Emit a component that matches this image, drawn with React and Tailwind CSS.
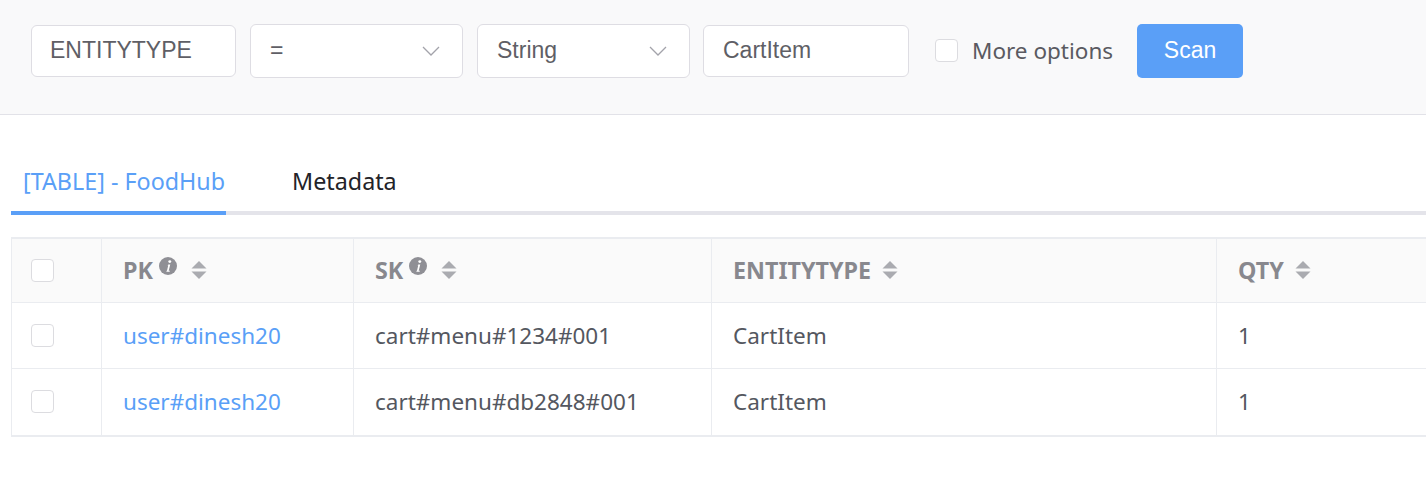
import React from "react";

const Chevron = () => (
  <svg width="18" height="10" viewBox="0 0 18 10" fill="none" className="shrink-0">
    <path d="M1 1l8 8 8-8" stroke="#a3a3aa" strokeWidth="1.3" />
  </svg>
);

const Info = () => (
  <svg width="18" height="18" viewBox="0 0 16 16" className="shrink-0 -mt-[9px] ml-[6px]">
    <circle cx="8" cy="8" r="8" fill="#8f8f95" />
    <circle cx="9.6" cy="4.1" r="1.3" fill="#fff" />
    <path d="M8.3 6.6h1.7l-1.4 5.6h1.1l-0.3 1h-2.9l0.3-1h0.3l1.1-4.6h-0.6z" fill="#fff" />
  </svg>
);

const Sort = () => (
  <svg width="16" height="20" viewBox="0 0 16 20" className="shrink-0">
    <path d="M8 1l7.5 7.5H0.5z" fill="#aaabb0" />
    <path d="M8 19l7.5-7.5H0.5z" fill="#aaabb0" />
  </svg>
);

const Box = () => (
  <div className="w-[23px] h-[23px] rounded-[4px] border border-[#dcdce0] bg-white" />
);

const rows = [
  { pk: "user#dinesh20", sk: "cart#menu#1234#001", type: "CartItem", qty: "1" },
  { pk: "user#dinesh20", sk: "cart#menu#db2848#001", type: "CartItem", qty: "1" },
];

const cols = "grid grid-cols-[89px_252px_358px_505px_1fr]";

export default function App() {
  return (
    <div className="w-[1426px] h-[492px] bg-white overflow-hidden font-['Noto_Sans',sans-serif]">
      <div className="h-[115px] bg-[#f9f9fa] border-b border-[#e2e2e8] flex items-center pl-[31px] pb-[13px]">
        <div className="w-[205px] h-[52px] rounded-[6px] border border-[#dedde3] bg-white flex items-center px-[18px] text-[23px] text-[#5f5f66] font-['Liberation_Sans',sans-serif]">
          ENTITYTYPE
        </div>
        <div className="ml-[14px] w-[213px] h-[54px] rounded-[6px] border border-[#dedde3] bg-white flex items-center justify-between pl-[19px] pr-[22px] text-[23px] text-[#5f5f66] font-['Liberation_Sans',sans-serif]">
          <span>=</span>
          <Chevron />
        </div>
        <div className="ml-[14px] w-[213px] h-[54px] rounded-[6px] border border-[#dedde3] bg-white flex items-center justify-between pl-[19px] pr-[22px] text-[23px] text-[#5f5f66] font-['Liberation_Sans',sans-serif]">
          <span>String</span>
          <Chevron />
        </div>
        <div className="ml-[13px] w-[206px] h-[52px] rounded-[6px] border border-[#dedde3] bg-white flex items-center px-[19px] text-[23px] text-[#5f5f66] font-['Liberation_Sans',sans-serif]">
          CartItem
        </div>
        <div className="flex items-center gap-[14px] ml-[26px]">
          <Box />
          <span className="text-[22.5px] text-[#5a5a61]">More options</span>
        </div>
        <button className="ml-[24px] w-[106px] h-[54px] rounded-[5px] bg-[#5a9ff7] text-white text-[23px] font-['Liberation_Sans',sans-serif]">
          Scan
        </button>
      </div>

      <div className="pt-[49px] pl-[11px]">
        <div className="flex border-b-[4px] border-[#e4e4ea]">
          <div className="-mb-[4px] border-b-[4px] border-[#5a9ff7] pl-[12px] pr-[1px] pb-[12px] text-[23.3px] text-[#5a9ff7]">
            [TABLE] - FoodHub
          </div>
          <div className="pl-[66px] pb-[12px] text-[23.3px] text-[#232328]">Metadata</div>
        </div>

        <div className="mt-[22px] border-t-2 border-l border-b-2 border-[#eaecf0] text-[22.5px]">
          <div className={`${cols} h-[64px] bg-[#fafafa] border-b border-[#eaecf0] font-bold text-[#88888e] text-[23.3px]`}>
            <div className="flex items-center pl-[19px]">
              <Box />
            </div>
            <div className="flex items-center pl-[21px] border-l border-[#eaecf0]">
              <span>PK</span>
              <Info />
              <span className="ml-[14px]"><Sort /></span>
            </div>
            <div className="flex items-center pl-[21px] border-l border-[#eaecf0]">
              <span>SK</span>
              <Info />
              <span className="ml-[14px]"><Sort /></span>
            </div>
            <div className="flex items-center pl-[21px] border-l border-[#eaecf0]">
              <span>ENTITYTYPE</span>
              <span className="ml-[11px]"><Sort /></span>
            </div>
            <div className="flex items-center pl-[21px] border-l border-[#eaecf0]">
              <span>QTY</span>
              <span className="ml-[11px]"><Sort /></span>
            </div>
          </div>
          {rows.map((r, i) => (
            <div
              key={i}
              className={`${cols} h-[66px] text-[#545760] ${i === 0 ? "border-b border-[#eaecf0]" : ""}`}
            >
              <div className="flex items-center pl-[19px]">
                <Box />
              </div>
              <div className="flex items-center pl-[21px] border-l border-[#eaecf0] text-[#5a9ff7]">{r.pk}</div>
              <div className="flex items-center pl-[21px] border-l border-[#eaecf0]">{r.sk}</div>
              <div className="flex items-center pl-[21px] border-l border-[#eaecf0]">{r.type}</div>
              <div className="flex items-center pl-[21px] border-l border-[#eaecf0]">{r.qty}</div>
            </div>
          ))}
        </div>
      </div>
    </div>
  );
}
